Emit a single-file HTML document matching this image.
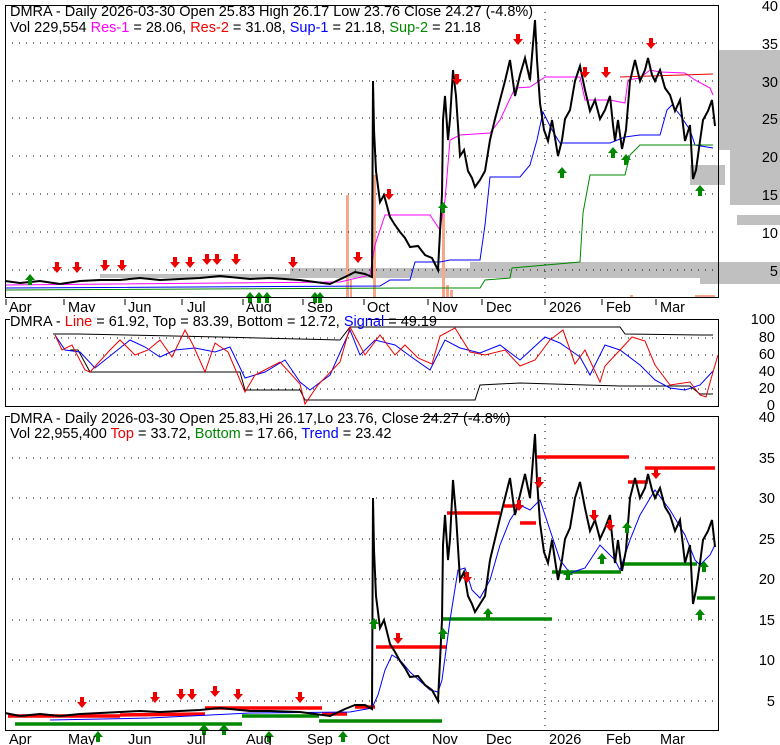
<!DOCTYPE html>
<html><head><style>
html,body{margin:0;padding:0;background:#fff;width:780px;height:745px;overflow:hidden}
svg text{font-family:"Liberation Sans",Arial,sans-serif;font-size:14.5px}
</style></head><body>
<svg width="780" height="745" viewBox="0 0 780 745" xmlns="http://www.w3.org/2000/svg">
<defs>
<g id="dn"><path d="M-2,-8h4v5h3l-5,6l-5,-6h3z" fill="#e00"/></g>
<g id="up"><path d="M-2,8h4v-5h3l-5,-6l-5,6h3z" fill="#080"/></g>
</defs>
<!-- ===== TOP PANEL ===== -->
<g fill="#c0c0c0">
<rect x="719" y="50" width="61" height="100"/>
<rect x="730" y="150" width="50" height="55"/>
<rect x="690" y="165" width="35" height="20"/>
<rect x="737" y="215" width="43" height="10"/>
<rect x="100" y="274" width="680" height="4"/>
<rect x="290" y="268" width="490" height="6"/>
<rect x="470" y="262" width="310" height="6"/>
<rect x="700" y="278" width="80" height="6"/>
</g>
<g fill="#f8a88a">
<rect x="346" y="195" width="3" height="103"/><rect x="373" y="175" width="3" height="123"/>
<rect x="442" y="210" width="3" height="88"/><rect x="350" y="280" width="2" height="18"/>
<rect x="446" y="285" width="3" height="13"/><rect x="450" y="290" width="3" height="8"/>
<rect x="630" y="295" width="3" height="3"/><rect x="695" y="295" width="20" height="3"/>
</g>
<g stroke="#000" stroke-dasharray="1,6" stroke-width="1">
<line x1="5" y1="43" x2="719" y2="43"/><line x1="5" y1="81" x2="719" y2="81"/>
<line x1="5" y1="118" x2="719" y2="118"/><line x1="5" y1="156" x2="719" y2="156"/>
<line x1="5" y1="194" x2="719" y2="194"/><line x1="5" y1="232" x2="719" y2="232"/>
<line x1="5" y1="270" x2="719" y2="270"/>
<line x1="545" y1="5" x2="545" y2="298"/>
</g>
<polyline fill="none" stroke="#f0f" stroke-width="1" points="5,285 340,282 370,275 375,245 385,215 430,215 440,230 445,200 450,140 460,135 490,133 500,120 515,88 530,87 545,77 580,77 585,100 610,100 625,103 628,80 640,78 650,70 660,72 685,73 695,80 710,88 713,95"/>
<line x1="620" y1="77" x2="713" y2="74" stroke="#e00"/>
<polyline fill="none" stroke="#00f" stroke-width="1" points="5,288 380,286 390,280 410,280 415,262 440,262 450,260 480,260 485,225 490,177 520,177 530,165 537,140 543,112 552,130 560,143 610,143 625,137 640,135 660,135 667,110 672,105 680,115 690,130 695,145 713,148"/>
<polyline fill="none" stroke="#080" stroke-width="1" points="5,290 410,288 480,288 485,280 510,278 512,268 580,262 583,213 590,175 625,175 630,155 640,145 713,145"/>
<polyline fill="none" stroke="#000" stroke-width="2" points="5,281 20,283 40,281 60,284 80,281 100,280 120,280 140,278 160,280 200,278 220,276 250,279 270,278 300,280 315,282 330,284 345,277 355,272 365,274 372,277 373,81 374,130 376,171 380,202 384,195 390,217 395,225 400,232 405,238 410,247 418,246 425,255 432,258 438,270 442,194 443,120 445,96 448,140 450,119 453,70 456,96 460,156 464,150 468,171 472,178 475,187 480,180 485,171 490,140 495,119 500,100 505,81 510,60 515,96 520,75 525,58 530,80 535,20 537,60 540,103 544,130 548,141 552,120 558,156 562,140 565,119 570,110 575,81 580,66 585,90 590,111 595,100 600,119 605,110 610,96 613,125 615,141 618,120 622,149 626,130 630,81 635,60 640,81 645,70 648,58 652,75 655,81 660,70 665,88 670,95 675,111 680,100 685,141 690,125 693,179 696,170 700,141 703,120 708,111 712,100 715,126"/>
<use href="#dn" x="57" y="270"/><use href="#dn" x="77" y="270"/><use href="#dn" x="105" y="268"/><use href="#dn" x="122" y="268"/>
<use href="#dn" x="175" y="265"/><use href="#dn" x="190" y="265"/><use href="#dn" x="207" y="262"/><use href="#dn" x="217" y="262"/><use href="#dn" x="236" y="262"/><use href="#dn" x="293" y="265"/>
<use href="#dn" x="358" y="260"/><use href="#dn" x="389" y="197"/><use href="#dn" x="457" y="82"/><use href="#dn" x="518" y="42"/>
<use href="#dn" x="585" y="75"/><use href="#dn" x="606" y="75"/><use href="#dn" x="651" y="46"/>
<use href="#up" x="30" y="277"/><use href="#up" x="250" y="295"/><use href="#up" x="259" y="295"/><use href="#up" x="267" y="295"/><use href="#up" x="315" y="295"/><use href="#up" x="320" y="295"/>
<use href="#up" x="443" y="205"/><use href="#up" x="562" y="170"/><use href="#up" x="613" y="150"/><use href="#up" x="626" y="157"/><use href="#up" x="700" y="188"/>
<rect x="5.5" y="5.5" width="713" height="292" fill="none" stroke="#000"/>
<g fill="#000"><text x="10" y="16">DMRA - Daily 2026-03-30 Open 25.83  High 26.17  Low 23.76  Close 24.27 (-4.8%)</text>
<text x="10" y="32">Vol 229,554 <tspan fill="#f0f">Res-1</tspan> = 28.06, <tspan fill="#e00">Res-2</tspan> = 31.08, <tspan fill="#00f">Sup-1</tspan> = 21.18, <tspan fill="#080">Sup-2</tspan> = 21.18</text></g>
<g text-anchor="end" fill="#000"><text x="778" y="11">40</text><text x="778" y="49">35</text><text x="778" y="87">30</text><text x="778" y="124">25</text><text x="778" y="162">20</text><text x="778" y="200">15</text><text x="778" y="238">10</text><text x="778" y="276">5</text></g>
<g fill="#000"><text x="9" y="312">Apr</text><text x="68" y="312">May</text><text x="128" y="312">Jun</text><text x="187" y="312">Jul</text><text x="246" y="312">Aug</text><text x="307" y="312">Sep</text><text x="367" y="312">Oct</text><text x="432" y="312">Nov</text><text x="486" y="312">Dec</text><text x="549" y="312">2026</text><text x="606" y="312">Feb</text><text x="660" y="312">Mar</text></g>
<g stroke="#000"><line x1="6" y1="299" x2="6" y2="305"/><line x1="64" y1="299" x2="64" y2="305"/><line x1="125" y1="299" x2="125" y2="305"/><line x1="182" y1="299" x2="182" y2="305"/><line x1="243" y1="299" x2="243" y2="305"/><line x1="303" y1="299" x2="303" y2="305"/><line x1="364" y1="299" x2="364" y2="305"/><line x1="428" y1="299" x2="428" y2="305"/><line x1="482" y1="299" x2="482" y2="305"/><line x1="545" y1="299" x2="545" y2="305"/><line x1="602" y1="299" x2="602" y2="305"/><line x1="656" y1="299" x2="656" y2="305"/></g>

<!-- ===== STOCH PANEL ===== -->
<g stroke="#000" stroke-dasharray="1,6"><line x1="5" y1="338" x2="719" y2="338"/><line x1="5" y1="355" x2="719" y2="355"/><line x1="5" y1="372" x2="719" y2="372"/><line x1="5" y1="389" x2="719" y2="389"/></g>
<polyline fill="none" stroke="#000" points="53,334 78,334 220,337 340,340 350,327 480,327 620,327 625,334 700,335 713,335"/>
<polyline fill="none" stroke="#000" points="70,350 78,350 90,372 240,372 245,390 300,390 305,400 350,400 420,400 475,400 480,385 520,383 620,386 690,386 700,394 713,394"/>
<polyline fill="none" stroke="#00f" points="55,335 65,350 80,352 95,368 130,340 145,347 160,357 175,350 195,348 215,352 230,347 245,378 265,372 285,360 300,382 310,390 330,375 350,330 360,355 375,340 395,345 410,356 430,370 445,340 460,348 480,353 500,345 520,360 545,337 560,343 570,350 580,357 590,375 605,345 620,350 640,365 655,380 670,388 685,390 700,385 713,371"/>
<polyline fill="none" stroke="#e00" points="55,335 62,350 72,345 85,370 90,372 110,350 120,340 135,355 148,350 160,340 172,357 185,330 193,345 205,372 215,343 228,352 245,392 255,375 280,362 300,384 305,404 318,385 340,362 350,327 365,355 380,335 395,355 405,345 418,358 432,364 440,336 455,328 470,352 485,355 505,350 520,366 535,360 550,340 563,330 575,364 585,350 600,382 605,366 620,350 632,337 645,341 655,365 670,385 690,382 700,395 706,397 713,372 718,355"/>
<rect x="5.5" y="319.5" width="713" height="87" fill="none" stroke="#000"/>
<rect x="10" y="312" width="358" height="14" fill="#fff"/>
<text x="10" y="326" fill="#000">DMRA - <tspan fill="#e00">Line</tspan> = 61.92, Top = 83.39, Bottom = 12.72, <tspan fill="#00f">Signal</tspan> = 49.19</text>
<g text-anchor="end" fill="#000"><text x="775" y="324">100</text><text x="775" y="342">80</text><text x="775" y="359">60</text><text x="775" y="376">40</text><text x="775" y="393">20</text><text x="775" y="410">0</text></g>

<!-- ===== BOTTOM PANEL ===== -->
<g stroke="#000" stroke-dasharray="1,6"><line x1="5" y1="458" x2="719" y2="458"/><line x1="5" y1="498" x2="719" y2="498"/><line x1="5" y1="539" x2="719" y2="539"/><line x1="5" y1="579" x2="719" y2="579"/><line x1="5" y1="620" x2="719" y2="620"/><line x1="5" y1="660" x2="719" y2="660"/><line x1="5" y1="701" x2="719" y2="701"/><line x1="545" y1="417" x2="545" y2="731"/></g>
<g stroke="#f00" stroke-width="3.5">
<line x1="8" y1="716" x2="120" y2="716"/><line x1="120" y1="715" x2="205" y2="714"/><line x1="205" y1="708" x2="322" y2="708"/><line x1="322" y1="714" x2="347" y2="714"/><line x1="355" y1="707" x2="375" y2="707"/>
<line x1="376" y1="647" x2="447" y2="647"/><line x1="447" y1="513" x2="500" y2="513"/><line x1="504" y1="506" x2="520" y2="506"/><line x1="520" y1="523" x2="536" y2="523"/><line x1="535" y1="457" x2="629" y2="457"/>
<line x1="628" y1="482" x2="648" y2="482"/><line x1="645" y1="468" x2="715" y2="468"/></g>
<g stroke="#080" stroke-width="3.5">
<line x1="15" y1="724" x2="242" y2="724"/><line x1="242" y1="716" x2="319" y2="716"/><line x1="319" y1="721" x2="442" y2="721"/>
<line x1="442" y1="619" x2="552" y2="619"/><line x1="552" y1="572" x2="621" y2="572"/><line x1="621" y1="564" x2="697" y2="564"/><line x1="697" y1="598" x2="715" y2="598"/></g>
<polyline fill="none" stroke="#00f" points="50,720 150,718 250,713 350,712 372,708 378,695 385,670 392,655 400,660 410,672 430,690 438,692 442,680 450,620 458,570 465,568 472,590 480,598 490,580 500,545 510,520 520,505 530,510 540,500 550,530 560,560 570,573 585,568 600,545 615,560 620,570 630,540 640,515 655,490 670,510 685,535 695,560 700,565 710,555 715,545"/>
<polyline fill="none" stroke="#000" stroke-width="2" points="5,713 20,716 40,714 60,716 80,714 100,713 120,712 140,711 160,712 200,710 220,708 250,711 270,711 300,712 315,714 330,716 345,709 355,705 365,705 372,709 373,498 374,550 376,596 380,628 384,620 390,644 395,652 400,661 405,668 410,677 418,676 425,685 432,690 438,701 442,620 443,545 445,515 448,560 450,539 453,480 456,515 460,580 464,572 468,596 472,604 475,612 480,604 485,596 490,560 495,539 500,518 505,498 510,478 515,515 520,495 525,474 530,498 535,434 537,480 540,523 544,552 548,563 552,540 558,580 562,560 565,539 570,528 575,498 580,482 585,508 590,531 595,520 600,539 605,528 610,515 613,545 615,563 618,540 622,571 626,550 630,498 635,478 640,498 645,488 648,474 652,490 655,498 660,488 665,507 670,515 675,531 680,520 685,563 690,545 693,604 696,590 700,563 703,540 708,531 712,520 715,547"/>
<use href="#dn" x="82" y="705"/><use href="#dn" x="155" y="700"/><use href="#dn" x="181" y="697"/><use href="#dn" x="192" y="697"/><use href="#dn" x="215" y="694"/><use href="#dn" x="238" y="697"/><use href="#dn" x="300" y="700"/>
<use href="#dn" x="398" y="641"/><use href="#dn" x="467" y="580"/><use href="#dn" x="539" y="485"/><use href="#dn" x="519" y="508"/><use href="#dn" x="594" y="518"/><use href="#dn" x="610" y="528"/><use href="#dn" x="656" y="476"/>
<use href="#up" x="98" y="734"/><use href="#up" x="204" y="727"/><use href="#up" x="224" y="727"/><use href="#up" x="269" y="734"/><use href="#up" x="343" y="734"/><use href="#up" x="374" y="621"/><use href="#up" x="443" y="631"/>
<use href="#up" x="488" y="611"/><use href="#up" x="568" y="572"/><use href="#up" x="602" y="556"/><use href="#up" x="627" y="525"/><use href="#up" x="700" y="612"/><use href="#up" x="704" y="564"/>
<rect x="5.5" y="416.5" width="713" height="314" fill="none" stroke="#000"/>
<rect x="10" y="409" width="410" height="30" fill="#fff"/>
<g fill="#000"><text x="10" y="423">DMRA - Daily 2026-03-30 Open 25.83,Hi 26.17,Lo 23.76, Close 24.27 (-4.8%)</text>
<text x="10" y="438">Vol 22,955,400 <tspan fill="#e00">Top</tspan> = 33.72, <tspan fill="#080">Bottom</tspan> = 17.66, <tspan fill="#00f">Trend</tspan> = 23.42</text></g>
<g text-anchor="end" fill="#000"><text x="775" y="422">40</text><text x="775" y="463">35</text><text x="775" y="503">30</text><text x="775" y="544">25</text><text x="775" y="584">20</text><text x="775" y="625">15</text><text x="775" y="665">10</text><text x="775" y="706">5</text></g>
<g fill="#000"><text x="9" y="744">Apr</text><text x="68" y="744">May</text><text x="128" y="744">Jun</text><text x="187" y="744">Jul</text><text x="246" y="744">Aug</text><text x="307" y="744">Sep</text><text x="367" y="744">Oct</text><text x="432" y="744">Nov</text><text x="486" y="744">Dec</text><text x="549" y="744">2026</text><text x="606" y="744">Feb</text><text x="660" y="744">Mar</text></g>
</svg>
</body></html>
